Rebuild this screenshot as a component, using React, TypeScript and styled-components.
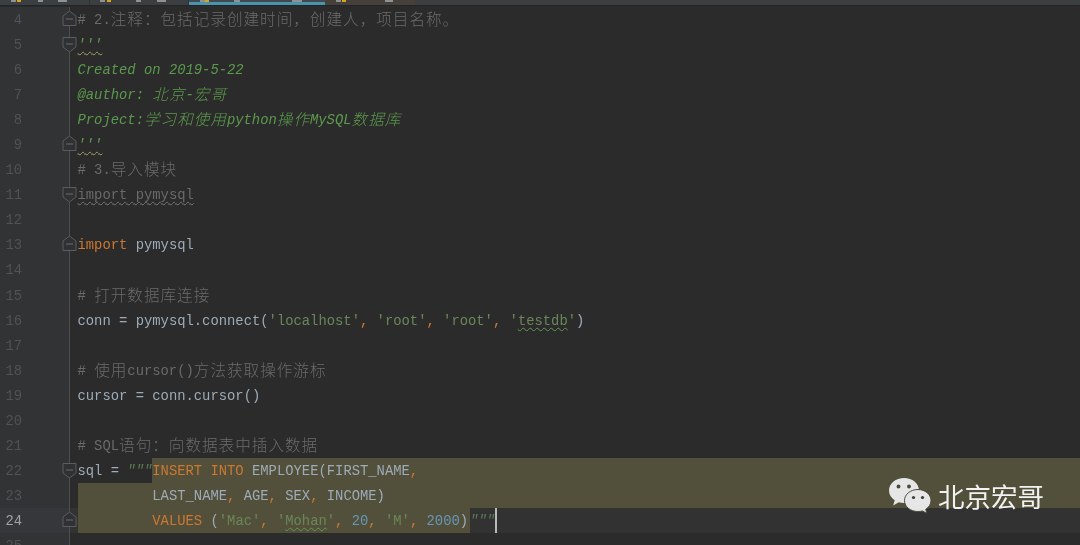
import React from "react";
import styled, { createGlobalStyle } from "styled-components";

const Global = createGlobalStyle`
  html, body { margin: 0; padding: 0; background: #2b2b2b; }
  body { width: 1080px; height: 545px; overflow: hidden; }
  #root { width: 1080px; height: 545px; }
`;

const Page = styled.div`
  position: relative;
  width: 1080px;
  height: 545px;
  overflow: hidden;
  display: flex;
  flex-direction: column;
  background: #2b2b2b;
  font-family: "Liberation Mono", "Noto Sans CJK SC", monospace;
  font-size: 13.85px;
  color: #9dabb8;
  filter: blur(0.35px);
`;

const TabBar = styled.div`
  flex: none;
  height: 5px;
  display: flex;
  background: #3c3f41;
  box-shadow: 0 1px 0 #232425;
`;

const Tab = styled.div<{ $w: number; $pad: number; $tone?: "active" | "warm" | "plain" }>`
  box-sizing: border-box;
  width: ${(p) => p.$w}px;
  padding-left: ${(p) => p.$pad}px;
  display: flex;
  align-items: flex-start;
  background: ${(p) => (p.$tone === "warm" ? "#45403a" : p.$tone === "active" ? "#3f4a50" : "#3c3f41")};
  border-right: ${(p) => (p.$tone ? "none" : "1px solid #2f3133")};
  border-bottom: ${(p) => (p.$tone === "active" ? "3px solid #4a93ab" : "none")};
`;

const TabMark = styled.span<{ $w: number; $ml?: number; $yellow?: boolean }>`
  flex: none;
  width: ${(p) => p.$w}px;
  height: 2px;
  margin-left: ${(p) => p.$ml ?? 0}px;
  background: ${(p) => (p.$yellow ? "#d9a520" : "#8f9294")};
`;

const Editor = styled.div`
  flex: 1;
  padding-top: 2px;
  min-height: 0;
`;

const Row = styled.div<{ $current?: boolean }>`
  height: 25.05px;
  display: flex;
  line-height: 26.5px;
  background: ${(p) => (p.$current ? "#323232" : "transparent")};
`;

const Num = styled.div<{ $current?: boolean }>`
  position: relative;
  flex: none;
  box-sizing: border-box;
  width: 70px;
  padding-right: 47px;
  text-align: right;
  background: ${(p) => (p.$current ? "#35373a" : "#313335")};
  border-right: 1px solid #4c4e50;
  color: ${(p) => (p.$current ? "#a4a3a3" : "#505355")};
`;

const FoldIcon = styled.svg<{ $dir: "up" | "down" }>`
  position: absolute;
  left: 62px;
  top: ${(p) => (p.$dir === "up" ? 3 : 5)}px;
  width: 15px;
  height: 16px;
`;

const Code = styled.div`
  flex: 1;
  min-width: 0;
  display: flex;
  padding-left: 7.5px;
`;

const Run = styled.span`
  flex: none;
  white-space: pre;
`;

const Selected = styled.span<{ $fill?: boolean }>`
  flex: ${(p) => (p.$fill ? "1" : "none")};
  padding-right: ${(p) => (p.$fill ? "0" : "2px")};
  white-space: pre;
  background: #52503a;
`;

const colors = {
  comment: "#6a6a6a",
  doc: "#5b9a4c",
  quote: "#5a7a50",
  kw: "#cc7832",
  str: "#6a8759",
  num: "#6897bb",
};

const Tok = styled.span<{ $k: keyof typeof colors; $it?: boolean; $wave?: string }>`
  color: ${(p) => colors[p.$k]};
  font-style: ${(p) => (p.$it ? "italic" : "normal")};
  ${(p) =>
    p.$wave
      ? `text-decoration: underline wavy ${p.$wave} 1px; text-underline-offset: 2px; text-decoration-skip-ink: none;`
      : ""}
`;

const Han = styled.span`
  font-family: "Noto Sans CJK SC", sans-serif;
  font-size: 15.6px;
  letter-spacing: 1px;
  font-weight: 300;
  line-height: 0;
  vertical-align: -1px;
`;

const Caret = styled.span`
  flex: none;
  align-self: stretch;
  width: 2px;
  background: #b9b9b9;
`;

const Watermark = styled.div`
  position: absolute;
  left: 889px;
  top: 477px;
  display: flex;
  align-items: center;
  gap: 6px;
  color: #f2f2f2;
  font-family: "Noto Sans CJK SC", sans-serif;
  font-size: 26.5px;
  line-height: 37px;
`;

const Fold = ({ dir }: { dir: "up" | "down" }) => (
  <FoldIcon $dir={dir} viewBox="0 0 15 16">
    {dir === "up" ? (
      <path d="M1 15.500V6L7.500 1L14 6V15.500Z" fill="#2f3133" stroke="#5a5d60" strokeWidth="1" />
    ) : (
      <path d="M1 0.500V10L7.500 15L14 10V0.500Z" fill="#2f3133" stroke="#5a5d60" strokeWidth="1" />
    )}
    <path d={dir === "up" ? "M4 9H11" : "M4 7H11"} stroke="#6a6d70" strokeWidth="1" />
  </FoldIcon>
);

const Logo = () => (
  <svg width="43" height="37" viewBox="0 0 43 37">
    <path d="M15 1C7 1 0 6.300 0 13.500C0 17.600 2.200 21 5.700 23.300L4.200 28.500L9.800 25.300C11.500 25.800 13.200 26.100 15 26.100C23.300 26.100 30 20.500 30 13.500C30 6.300 23.300 1 15 1Z" fill="#e6e6e6" />
    <circle cx="9.500" cy="9.500" r="1.900" fill="#4a4a3c" />
    <circle cx="20" cy="9.500" r="1.900" fill="#4a4a3c" />
    <path d="M29 12.500C21.300 12.500 15.500 17.500 15.500 23.500C15.500 29.700 21.300 34.500 29 34.500C30.500 34.500 32 34.300 33.300 33.900L37.800 36.300L36.700 32.300C39.900 30.300 42 27.200 42 23.500C42 17.500 36.200 12.500 29 12.500Z" fill="#e6e6e6" stroke="#4a4a3c" strokeWidth="1" />
    <circle cx="24.500" cy="20.500" r="1.600" fill="#3c3c3c" />
    <circle cx="33.500" cy="20.500" r="1.600" fill="#3c3c3c" />
  </svg>
);

type LineDef = { n: number; fold?: "up" | "down"; current?: boolean; body?: React.ReactNode };

const Comma = () => <Tok $k="kw">,</Tok>;

const lines: LineDef[] = [
  { n: 4, fold: "up", body: <Run><Tok $k="comment"># 2.<Han>注释：包括记录创建时间，创建人，项目名称。</Han></Tok></Run> },
  { n: 5, fold: "down", body: <Run><Tok $k="doc" $it $wave="#a3a368">'''</Tok></Run> },
  { n: 6, body: <Run><Tok $k="doc" $it>Created on 2019-5-22</Tok></Run> },
  { n: 7, body: <Run><Tok $k="doc" $it>@author: <Han>北京</Han>-<Han>宏哥</Han></Tok></Run> },
  { n: 8, body: <Run><Tok $k="doc" $it>Project:<Han>学习和使用</Han>python<Han>操作</Han>MySQL<Han>数据库</Han></Tok></Run> },
  { n: 9, fold: "up", body: <Run><Tok $k="doc" $it $wave="#a3a368">'''</Tok></Run> },
  { n: 10, body: <Run><Tok $k="comment"># 3.<Han>导入模块</Han></Tok></Run> },
  { n: 11, fold: "down", body: <Run><Tok $k="comment" $wave="#77777a">import pymysql</Tok></Run> },
  { n: 12 },
  { n: 13, fold: "up", body: <Run><Tok $k="kw">import</Tok> pymysql</Run> },
  { n: 14 },
  { n: 15, body: <Run><Tok $k="comment"># <Han>打开数据库连接</Han></Tok></Run> },
  {
    n: 16,
    body: (
      <Run>
        conn = pymysql.connect(<Tok $k="str">'localhost'</Tok><Comma /> <Tok $k="str">'root'</Tok><Comma />{" "}
        <Tok $k="str">'root'</Tok><Comma /> <Tok $k="str">'<Tok $k="str" $wave="#629755">testdb</Tok>'</Tok>)
      </Run>
    ),
  },
  { n: 17 },
  { n: 18, body: <Run><Tok $k="comment"># <Han>使用</Han>cursor()<Han>方法获取操作游标</Han></Tok></Run> },
  { n: 19, body: <Run>cursor = conn.cursor()</Run> },
  { n: 20 },
  { n: 21, body: <Run><Tok $k="comment"># SQL<Han>语句：向数据表中插入数据</Han></Tok></Run> },
  {
    n: 22,
    fold: "down",
    body: (
      <>
        <Run>sql = <Tok $k="quote" $it>"""</Tok></Run>
        <Selected $fill><Tok $k="kw">INSERT INTO</Tok> EMPLOYEE(FIRST_NAME<Comma /></Selected>
      </>
    ),
  },
  {
    n: 23,
    body: <Selected $fill>{"         "}LAST_NAME<Comma /> AGE<Comma /> SEX<Comma /> INCOME)</Selected>,
  },
  {
    n: 24,
    fold: "up",
    current: true,
    body: (
      <>
        <Selected>
          {"         "}<Tok $k="kw">VALUES</Tok> (<Tok $k="str">'Mac'</Tok><Comma />{" "}
          <Tok $k="str">'<Tok $k="str" $wave="#629755">Mohan</Tok>'</Tok><Comma /> <Tok $k="num">20</Tok><Comma />{" "}
          <Tok $k="str">'M'</Tok><Comma /> <Tok $k="num">2000</Tok>)
        </Selected>
        <Run><Tok $k="quote" $it>"""</Tok></Run>
        <Caret />
      </>
    ),
  },
  { n: 25 },
];

export default function App() {
  return (
    <Page>
      <Global />
      <TabBar>
        <Tab $w={90} $pad={11}>
          <TabMark $w={5} /><TabMark $w={4} $yellow $ml={1} /><TabMark $w={5} $ml={17} /><TabMark $w={9} $ml={15} />
        </Tab>
        <Tab $w={99} $pad={10}>
          <TabMark $w={5} /><TabMark $w={4} $yellow $ml={2} /><TabMark $w={5} $ml={25} /><TabMark $w={9} $ml={16} />
        </Tab>
        <Tab $w={136} $pad={11} $tone="active">
          <TabMark $w={5} /><TabMark $w={4} $yellow $ml={0} /><TabMark $w={6} $ml={25} /><TabMark $w={10} $ml={52} />
        </Tab>
        <Tab $w={90} $pad={11} $tone="warm">
          <TabMark $w={5} /><TabMark $w={4} $yellow $ml={1} /><TabMark $w={8} $ml={39} />
        </Tab>
      </TabBar>
      <Editor>
        {lines.map((l) => (
          <Row key={l.n} $current={l.current}>
            <Num $current={l.current}>
              {l.n}
              {l.fold && <Fold dir={l.fold} />}
            </Num>
            <Code>{l.body}</Code>
          </Row>
        ))}
      </Editor>
      <Watermark>
        <Logo />
        北京宏哥
      </Watermark>
    </Page>
  );
}
